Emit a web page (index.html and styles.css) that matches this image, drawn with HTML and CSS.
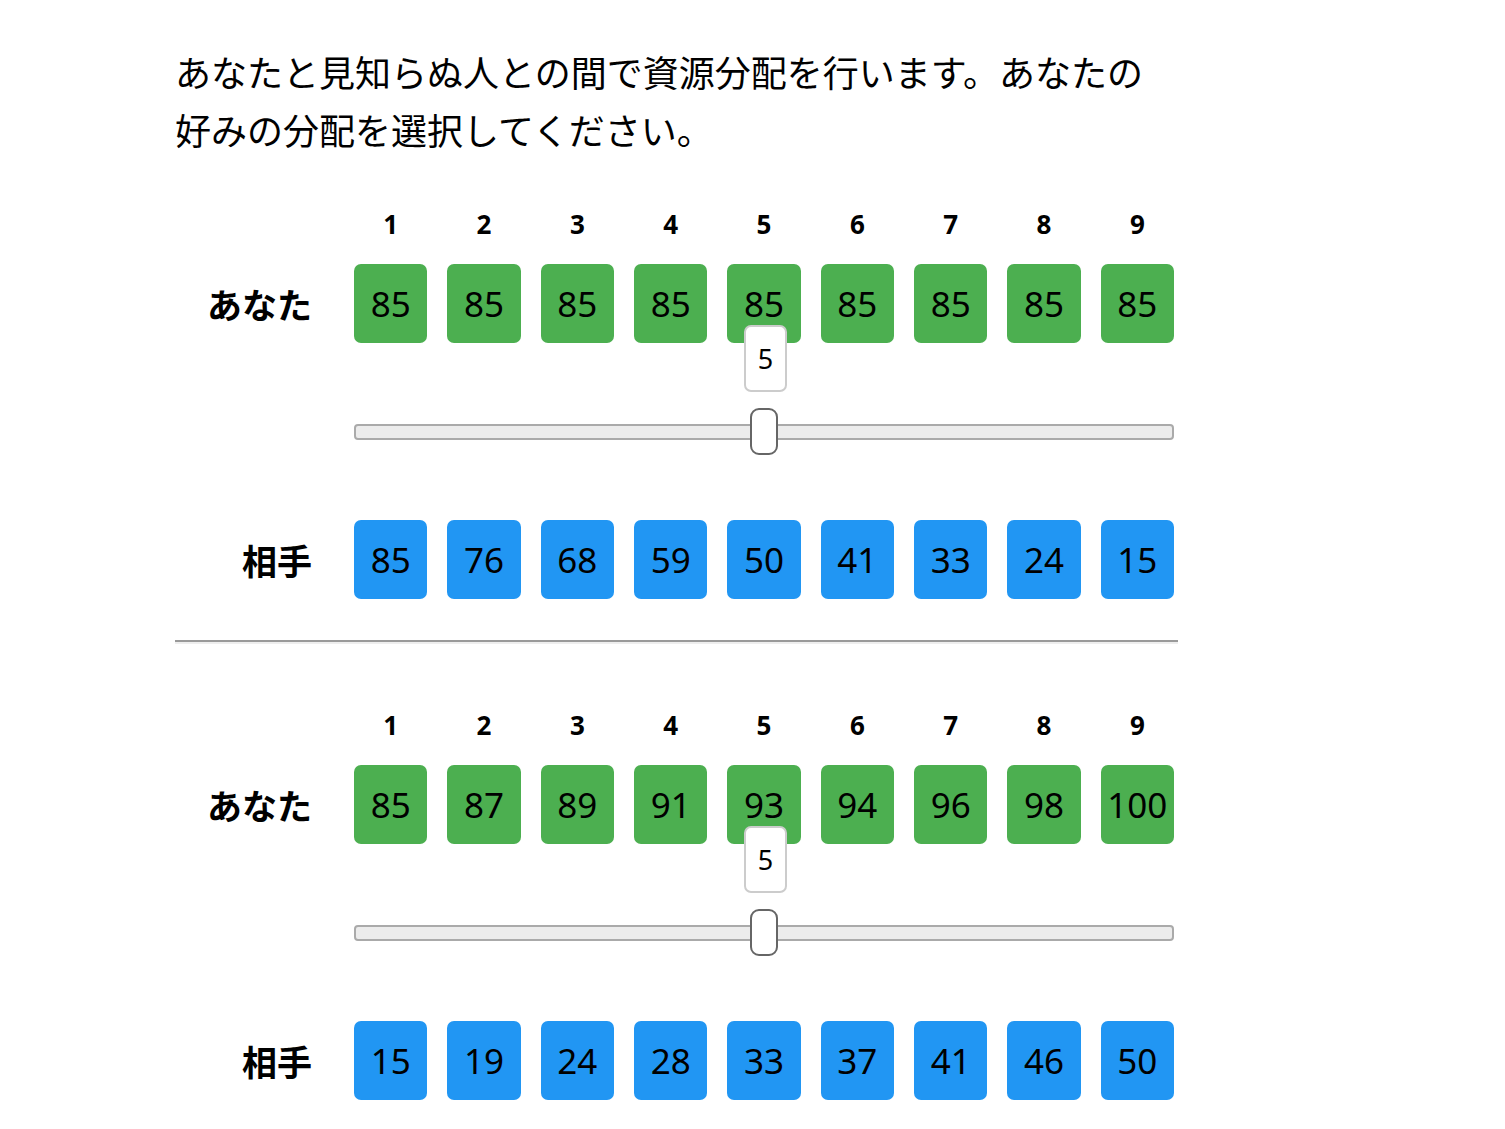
FILE: index.html
```html
<!DOCTYPE html>
<html lang="ja">
<head>
    <meta charset="UTF-8">
    <meta name="viewport" content="width=device-width, initial-scale=1.0">
    <title>資源分配</title>
    <link rel="stylesheet" href="styles.css">
</head>
<body>
    <div class="container">
        <p class="intro">あなたと見知らぬ人との間で資源分配を行います。あなたの好みの分配を選択してください。</p>

        <section class="choice">
            <div class="label"></div>
            <div class="cells nums">
                <span>1</span><span>2</span><span>3</span><span>4</span><span>5</span><span>6</span><span>7</span><span>8</span><span>9</span>
            </div>

            <div class="label">あなた</div>
            <div class="cells">
                <div class="cell you">85</div><div class="cell you">85</div><div class="cell you">85</div>
                <div class="cell you">85</div><div class="cell you">85</div><div class="cell you">85</div>
                <div class="cell you">85</div><div class="cell you">85</div><div class="cell you">85</div>
            </div>

            <div class="label"></div>
            <div class="slider-row">
                <div class="slider-wrap">
                    <output class="bubble" style="left: 50%">5</output>
                    <input class="slider" type="range" min="1" max="9" value="5">
                </div>
            </div>

            <div class="label">相手</div>
            <div class="cells">
                <div class="cell other">85</div><div class="cell other">76</div><div class="cell other">68</div>
                <div class="cell other">59</div><div class="cell other">50</div><div class="cell other">41</div>
                <div class="cell other">33</div><div class="cell other">24</div><div class="cell other">15</div>
            </div>
        </section>

        <hr>

        <section class="choice">
            <div class="label"></div>
            <div class="cells nums">
                <span>1</span><span>2</span><span>3</span><span>4</span><span>5</span><span>6</span><span>7</span><span>8</span><span>9</span>
            </div>

            <div class="label">あなた</div>
            <div class="cells">
                <div class="cell you">85</div><div class="cell you">87</div><div class="cell you">89</div>
                <div class="cell you">91</div><div class="cell you">93</div><div class="cell you">94</div>
                <div class="cell you">96</div><div class="cell you">98</div><div class="cell you">100</div>
            </div>

            <div class="label"></div>
            <div class="slider-row">
                <div class="slider-wrap">
                    <output class="bubble" style="left: 50%">5</output>
                    <input class="slider" type="range" min="1" max="9" value="5">
                </div>
            </div>

            <div class="label">相手</div>
            <div class="cells">
                <div class="cell other">15</div><div class="cell other">19</div><div class="cell other">24</div>
                <div class="cell other">28</div><div class="cell other">33</div><div class="cell other">37</div>
                <div class="cell other">41</div><div class="cell other">46</div><div class="cell other">50</div>
            </div>
        </section>
    </div>
</body>
</html>
```

FILE: styles.css
```css
body {
    margin: 0;
    padding: 0;
    background-color: #fff;
    color: #000;
    font-family: "Noto Sans", "Noto Sans CJK JP", sans-serif;
}
.container {
    width: 1003px;
    margin-left: 175px;
    padding-top: 42px;
}
.intro {
    font-family: "Noto Sans CJK JP", sans-serif;
    font-size: 36px;
    line-height: 58px;
    margin: 0 0 47px 0;
}
.choice {
    display: grid;
    grid-template-columns: 137px 820px;
    grid-template-rows: 59px 79px 177px 79px;
    column-gap: 42px;
}
.label {
    font-family: "Noto Sans CJK JP", sans-serif;
    font-weight: bold;
    font-size: 35px;
    text-align: right;
    display: flex;
    align-items: center;
    justify-content: flex-end;
}
.cells {
    display: grid;
    grid-template-columns: repeat(9, 1fr);
    column-gap: 20px;
}
.nums {
    height: 37px;
    font-weight: bold;
    font-size: 26px;
    align-items: center;
    text-align: center;
}
.cell {
    height: 79px;
    border-radius: 7px;
    display: flex;
    align-items: center;
    justify-content: center;
    font-size: 35px;
}
.you {
    background-color: #4caf50;
}
.other {
    background-color: #2196f3;
}
.slider-row {
    display: flex;
    align-items: center;
}
.slider-wrap {
    position: relative;
    width: 100%;
}
.bubble {
    position: absolute;
    top: -83px;
    width: 43px;
    height: 67px;
    margin-left: -20px;
    box-sizing: border-box;
    border: 2px solid #ccc;
    border-radius: 7px;
    background-color: #fff;
    font-size: 27px;
    display: flex;
    align-items: center;
    justify-content: center;
    z-index: 2;
}
.slider {
    -webkit-appearance: none;
    appearance: none;
    display: block;
    width: 100%;
    height: 47px;
    margin: 0;
    background: transparent;
}
.slider::-webkit-slider-runnable-track {
    height: 16px;
    box-sizing: border-box;
    border: 2px solid #aaa;
    border-radius: 4px;
    background-color: #ececec;
}
.slider::-webkit-slider-thumb {
    -webkit-appearance: none;
    width: 28px;
    height: 47px;
    box-sizing: border-box;
    border: 2px solid #666;
    border-radius: 9px;
    background-color: #fff;
    margin-top: -17.5px;
}
hr {
    margin: 41px 0 62px 0;
    border: none;
    border-top: 2px solid #9a9a9a;
    border-bottom: 2px solid #eee;
}
```
